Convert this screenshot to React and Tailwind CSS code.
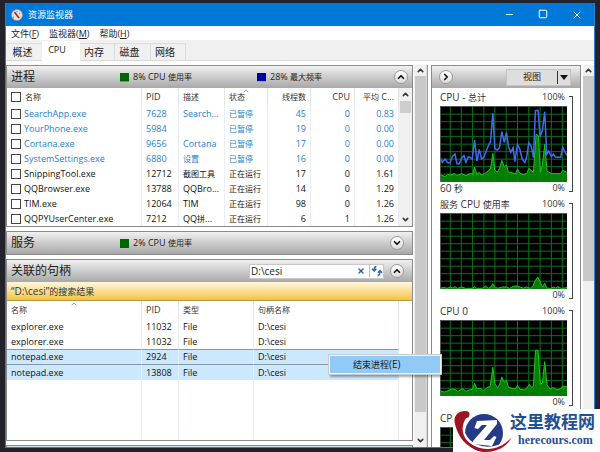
import React from "react";
import { ChevronUp, ChevronDown, ChevronRight, X, Minus, Square } from "lucide-react";

const processes = [
  ["SearchApp.exe", "7628", "Search...", "已暂停", "45", "0", "0.83"],
  ["YourPhone.exe", "5984", "", "已暂停", "19", "0", "0.00"],
  ["Cortana.exe", "9656", "Cortana", "已暂停", "17", "0", "0.00"],
  ["SystemSettings.exe", "6880", "设置", "已暂停", "16", "0", "0.00"],
  ["SnippingTool.exe", "12712", "截图工具", "正在运行", "17", "0", "1.61"],
  ["QQBrowser.exe", "13788", "QQBro...", "正在运行", "14", "0", "1.29"],
  ["TIM.exe", "12064", "TIM", "正在运行", "98", "0", "1.26"],
  ["QQPYUserCenter.exe", "7212", "QQ拼...", "正在运行", "6", "1", "1.26"],
];

const handles = [
  ["explorer.exe", "11032", "File", "D:\\cesi"],
  ["explorer.exe", "11032", "File", "D:\\cesi"],
  ["notepad.exe", "2924", "File", "D:\\cesi"],
  ["notepad.exe", "13808", "File", "D:\\cesi"],
];

const totalBlue =
  "45,218 52,232 60,222 68,233 75,233 82,215 90,207 96,236 103,236 110,218 117,212 123,232 130,215 137,218 142,222 149,165 156,228 163,193 170,222 177,217 183,200 190,183 197,170 204,84 210,190 217,195 224,188 231,140 238,172 245,143 251,185 258,202 265,188 270,230 278,178 285,192 292,222 300,233 306,215 312,173 319,183 326,218 332,77 340,76 346,155 353,135 360,80 366,208 372,198 380,215 386,207 393,217 408,217 414,187 427,212";
const totalGreen =
  "45,268 60,275 68,268 75,270 90,266 96,272 110,266 123,272 137,265 143,268 149,247 156,268 163,262 170,270 180,265 190,258 197,250 204,205 210,255 217,262 224,250 231,226 238,245 245,240 251,262 258,262 272,267 278,252 285,265 295,268 306,266 312,250 319,256 326,262 334,148 341,152 347,262 353,240 360,178 367,258 380,266 395,266 408,266 414,256 427,262";
const serviceGreen =
  "45,294 58,291 66,294 76,290 84,293 90,289 98,294 110,290 122,294 142,294 149,289 156,294 172,294 182,287 190,294 198,290 204,280 211,292 222,293 232,290 246,290 254,294 265,288 276,287 288,291 296,293 306,290 316,294 324,288 332,270 339,260 347,276 353,290 360,279 366,293 378,294 386,290 393,293 400,289 410,294 427,292";
const coreGreen =
  "45,269 58,273 70,269 80,264 90,265 98,272 112,263 124,271 137,265 143,266 149,247 156,263 166,262 176,269 186,260 196,256 204,199 210,248 218,260 224,252 231,228 238,244 245,238 251,259 262,262 272,264 278,253 286,265 300,267 308,258 314,250 320,259 326,256 332,148 340,148 347,250 353,246 360,182 367,252 376,264 386,260 396,266 408,264 414,255 427,257";

const isCjk = (s) => /[\u4e00-\u9fff]/.test(s);

/* Mixed text: Chinese runs are set one size smaller than the Latin ones. */
function Mixed({ text, small = "text-[8px]" }) {
  return text
    .split(/([\u4e00-\u9fff]+)/)
    .filter(Boolean)
    .map((part, i) =>
      isCjk(part) ? (
        <span key={i} className={`${small} leading-none`}>{part}</span>
      ) : (
        <React.Fragment key={i}>{part}</React.Fragment>
      )
    );
}

function RoundButton({ icon: Icon, label }) {
  return (
    <button
      aria-label={label}
      className="flex size-[14px] shrink-0 items-center justify-center rounded-full border border-[#999] bg-gradient-to-b from-white to-[#dcdcdc] text-[#111]"
    >
      <Icon size={10} strokeWidth={4} />
    </button>
  );
}

function Legend({ color, edge, children }) {
  return (
    <span className="flex w-[137px] items-center gap-1 text-[9px] whitespace-nowrap text-[#222]">
      <span className={`size-[9px] border-b ${color} ${edge}`} />
      <span>{children}</span>
    </span>
  );
}

function PanelHeader({ title, children, open }) {
  return (
    <header className="flex h-[22px] items-center bg-gradient-to-b from-[#f1f1f1] to-[#a8a8a8] pr-2 pl-1">
      <h2 className="w-[109px] shrink-0 text-[12px] leading-none text-[#222]">{title}</h2>
      <div className="flex flex-1 items-center">{children}</div>
      <RoundButton icon={open ? ChevronUp : ChevronDown} label={open ? "折叠" : "展开"} />
    </header>
  );
}

function SortMark() {
  return <ChevronUp size={8} strokeWidth={2} className="absolute -top-px left-1/2 -translate-x-1/2 text-[#777]" />;
}

const cell = "h-[15px] border-r border-[#e8eef4] px-1 py-0 leading-[14px] whitespace-nowrap overflow-hidden";
const head = "relative h-[18px] border-r border-[#e3e3e3] px-1 py-0 font-normal leading-[14px] whitespace-nowrap text-[#333]";

function ProcessTable() {
  return (
    <div className="flex">
      <table className="flex-1 table-fixed border-separate border-spacing-0 text-left text-[9px]">
        <colgroup>
          <col />
          <col className="w-[37px]" />
          <col className="w-[46px]" />
          <col className="w-[43px]" />
          <col className="w-[43px]" />
          <col className="w-[44px]" />
          <col className="w-[44px]" />
        </colgroup>
        <thead>
          <tr>
            <th className={head}>
              <label className="flex items-center gap-1">
                <input type="checkbox" className="size-[10px] appearance-none border border-[#444] bg-white" />
                <Mixed text="名称" />
              </label>
            </th>
            <th className={head}>PID</th>
            <th className={head}><Mixed text="描述" /></th>
            <th className={head}><SortMark /><Mixed text="状态" /></th>
            <th className={`${head} text-right`}><Mixed text="线程数" /></th>
            <th className={`${head} text-right`}>CPU</th>
            <th className={`${head} text-right`}><Mixed text="平均 C..." /></th>
          </tr>
        </thead>
        <tbody>
          {processes.map((row) => (
            <tr key={row[1]} className={row[3] === "已暂停" ? "text-[#2580cf]" : "text-[#111]"}>
              <td className={cell}>
                <label className="flex items-center gap-[3px]">
                  <input type="checkbox" className="size-[10px] shrink-0 appearance-none border border-[#444] bg-white" />
                  {row[0]}
                </label>
              </td>
              {row.slice(1).map((value, i) => (
                <td key={i} className={`${cell} ${i > 2 ? "text-right" : ""}`}>
                  <Mixed text={value} />
                </td>
              ))}
            </tr>
          ))}
        </tbody>
      </table>
      <div className="flex w-[13px] flex-col items-center bg-[#f0f0f0] text-[#333]">
        <ChevronUp size={9} strokeWidth={4} className="my-[2px]" />
        <div className="h-3 w-[11px] bg-[#cdcdcd]" />
        <ChevronDown size={9} strokeWidth={4} className="mt-auto mb-[2px]" />
      </div>
    </div>
  );
}

function HandleTable() {
  return (
    <div className="pr-[13px]">
      <table className="w-full table-fixed border-separate border-spacing-0 text-left text-[9px] text-[#111]">
        <colgroup>
          <col />
          <col className="w-[37px]" />
          <col className="w-[75px]" />
          <col className="w-[145px]" />
        </colgroup>
        <thead>
          <tr>
            <th className={head}><SortMark /><Mixed text="名称" /></th>
            <th className={head}>PID</th>
            <th className={head}><Mixed text="类型" /></th>
            <th className={head}><Mixed text="句柄名称" /></th>
          </tr>
        </thead>
        <tbody>
          {handles.map((row, r) => (
            <tr key={r} className={r > 1 ? "bg-[#cce8ff]" : ""}>
              {row.map((value, i) => (
                <td key={i} className={`${cell} ${r === 2 ? "border-y border-y-[#8798a5] leading-[13px]" : ""}`}>
                  {value}
                </td>
              ))}
            </tr>
          ))}
          <tr aria-hidden="true">
            {[0, 1, 2, 3].map((i) => (
              <td key={i} className="h-[60px] border-r border-[#e8eef4] p-0" />
            ))}
          </tr>
        </tbody>
      </table>
    </div>
  );
}

const verticals = [76, 109, 143, 177, 210, 244, 278, 312, 346, 380, 413];

function Graph({ label, top, green, blue, foot, scale = true }) {
  const bottom = top + 228;
  return (
    <section className="mb-[3px] flex gap-[2px]">
      <div className="min-w-0 flex-1">
        <div className="flex h-[14px] justify-between text-[10px] leading-[14px] whitespace-nowrap text-[#333]">
          <span><Mixed text={label} small="text-[9px]" /></span>
          {scale && <span className="pr-[2px] text-[9px]">100%</span>}
        </div>
        <svg viewBox={`45 ${top} 382 228`} preserveAspectRatio="none" className="mt-[2px] block h-[76px] w-full bg-black">
          <g stroke="#07751a" strokeWidth="3">
            {verticals.map((x) => (
              <line key={x} x1={x} x2={x} y1={top} y2={bottom} />
            ))}
            {[1, 2, 3, 4, 5, 6, 7, 8, 9].map((n) => (
              <line key={n} x1="45" x2="427" y1={top + 2 + n * 22.5} y2={top + 2 + n * 22.5} />
            ))}
          </g>
          <polygon points={`45,${bottom} ${green} 427,${bottom}`} fill="#058a05" fillOpacity="0.9" />
          <polyline points={green} fill="none" stroke="#19c819" strokeWidth="3" />
          {blue && <polyline points={blue} fill="none" stroke="#3f6cf0" strokeWidth="4.5" />}
          <path d={`M427 ${top + 1}H46V${bottom}`} fill="none" stroke="#666" strokeWidth="3" />
        </svg>
        {scale && (
          <div className="flex h-3 items-end justify-between text-[10px] leading-3 text-[#333]">
            <span><Mixed text={foot || ""} small="text-[9px]" /></span>
            <span className="pr-[2px] text-[9px]">0%</span>
          </div>
        )}
      </div>
      <div className="mt-[6px] mb-[2px] w-1 border-y border-r border-[#444]" />
    </section>
  );
}

function Logo() {
  return (
    <svg viewBox="0 0 60 43" className="h-[43px] w-[60px] shrink-0">
      <circle cx="31" cy="24" r="19" fill="#263b86" />
      <path d="M10 9C7 20 11 31 23 37C35 42 49 38 58 30" fill="none" stroke="#fff" strokeWidth="3" />
      <path d="M12 2C4 2 0 8 2 15C5 27 12 39 30 42.500C42 44 54 38 58.500 28.500C50 38 39 42 27 39C12 35 5 22 13 9Z" fill="#a01420" />
      <circle cx="13" cy="5.500" r="3.500" fill="#a01420" />
      <path d="M24 12L44 11L44 15L31 31H37L41 27L43.500 28L39 37L20 35V32L34 16H29L25 20L21.500 19Z" fill="#fff" />
    </svg>
  );
}

export default function App() {
  return (
    <div className="relative h-screen overflow-hidden bg-[#23222a] px-[5px] pt-[3px] pb-1 font-['Open_Sans','Noto_Sans_CJK_SC',sans-serif]">
      <div className="flex h-full flex-col overflow-hidden border-x border-b border-[#2c7fc9] bg-white">
        <div className="flex h-[23px] shrink-0 items-center bg-[#0078d7] pl-[5px] text-white">
          <svg viewBox="0 0 12 12" className="mr-[5px] size-3">
            <circle cx="6" cy="6" r="5.5" fill="#e9e4de" stroke="#8b8f96" strokeWidth=".6" />
            <path d="M3.500 3L8 9" stroke="#c0261c" strokeWidth="1.8" />
            <path d="M6 2v1M9 4l-1 .6M3 8l-1 .5" stroke="#555" strokeWidth=".8" />
          </svg>
          <h1 className="flex-1 text-[9px]">资源监视器</h1>
          <div className="flex">
            <button aria-label="最小化" className="flex w-[34px] justify-center"><Minus size={11} strokeWidth={2} /></button>
            <button aria-label="最大化" className="flex w-[34px] justify-center"><Square size={10} strokeWidth={2.4} /></button>
            <button aria-label="关闭" className="flex w-[34px] justify-center"><X size={12} strokeWidth={2} /></button>
          </div>
        </div>
        <nav className="flex h-[14px] shrink-0 items-center gap-[10px] pl-[5px] text-[9px] leading-none text-[#222]">
          <button>文件(<u>F</u>)</button>
          <button>监视器(<u>M</u>)</button>
          <button>帮助(<u>H</u>)</button>
        </nav>
        <div role="tablist" className="flex h-[21px] shrink-0 items-end border-b border-[#d9d9d9] bg-[#f0f0f0] pl-px text-[10px] leading-none text-[#222]">
          <button role="tab" className="h-[17px] w-[35px] border-t border-[#ddd] pr-1">概述</button>
          <button role="tab" aria-selected="true" className="-mb-px h-[20px] w-[38px] bg-white pr-2 pb-1 text-[9px]">CPU</button>
          <button role="tab" className="h-[17px] w-[35px] border-t border-r border-[#ddd] pr-[6px]">内存</button>
          <button role="tab" className="h-[17px] w-[36px] border-t border-r border-[#ddd] pr-[6px]">磁盘</button>
          <button role="tab" className="h-[17px] w-[35px] border-t border-r border-[#ddd] pr-[6px]">网络</button>
        </div>

        <main className="flex min-h-0 flex-1 pt-1">
          <div className="flex min-w-0 flex-1 flex-col gap-1 overflow-hidden">
            <section className="shrink-0 border border-[#8b8b8b]">
              <PanelHeader title="进程" open>
                <Legend color="bg-[#006400]" edge="border-[#35c035]"><Mixed text="8% CPU 使用率" /></Legend>
                <Legend color="bg-[#0000a8]" edge="border-[#6fa8ff]"><Mixed text="28% 最大频率" /></Legend>
              </PanelHeader>
              <ProcessTable />
            </section>
            <section className="shrink-0 border border-[#8b8b8b]">
              <PanelHeader title="服务">
                <Legend color="bg-[#006400]" edge="border-[#006400]"><Mixed text="2% CPU 使用率" /></Legend>
              </PanelHeader>
            </section>
            <section className="shrink-0 border border-[#8b8b8b]">
              <PanelHeader title="关联的句柄" open>
                <div className="mr-[6px] ml-auto flex h-[15px] w-[135px] items-center border border-[#c8c8c8] bg-white text-[#2c66a8]">
                  <input aria-label="搜索句柄" defaultValue="D:\cesi" className="min-w-0 flex-1 px-px text-[10px] leading-none text-[#222] outline-none" />
                  <button aria-label="清除" className="px-1"><X size={8} strokeWidth={4} /></button>
                  <button aria-label="刷新" className="border-l border-[#bbb] pl-px">
                    <svg viewBox="0 0 12 12" className="size-3" fill="none" stroke="#2c66a8" strokeWidth="1.4">
                      <path d="M5.500 1.500C3.500 1.500 3.200 3 3.200 5M1 3.800L3.200 6L5.400 3.800M6.500 10.500C8.500 10.500 9 9 9 6.500M6.800 7.800L9 5.600L11.200 7.800" />
                    </svg>
                  </button>
                </div>
              </PanelHeader>
              <p className="h-[19px] border-b border-[#b59a4a] bg-gradient-to-b from-[#fff7dc] to-[#f4c332] px-1 text-[10px] leading-[18px] text-[#333]">
                <Mixed text={"\u201cD:\\cesi\u201d的搜索结果"} small="text-[9px]" />
              </p>
              <HandleTable />
            </section>
            <section className="h-6 shrink-0 border border-[#8b8b8b] bg-[#cfe3ee]" />
          </div>
          <div className="ml-px flex w-3 shrink-0 flex-col items-center bg-[#f0f0f0] text-[#333]">
            <ChevronUp size={9} strokeWidth={4} className="my-[1px] shrink-0" />
            <div className="h-[336px] w-[11px] bg-[#c9c9c9]" />
            <ChevronDown size={9} strokeWidth={4} className="mt-auto mb-[2px] shrink-0" />
          </div>
          <div className="mr-[3px] w-[2px] shrink-0 border-r border-[#999] bg-[#ddd]" />

          <aside className="w-[150px] shrink-0 overflow-hidden border border-b-0 border-[#8b8b8b]">
            <header className="flex h-[22px] items-center justify-between bg-gradient-to-b from-[#f1f1f1] to-[#a8a8a8] pr-[9px] pl-[7px]">
              <RoundButton icon={ChevronRight} label="折叠图表" />
              <button className="flex h-[17px] w-[65px] items-center border border-[#c4c4c4] bg-[#dedede] text-[9px] text-[#222]">
                <span className="flex-1">视图</span>
                <span className="flex h-[13px] items-center border-l border-[#333] px-[2px]">
                  <svg viewBox="0 0 8 5" className="h-[5px] w-2"><path d="M0 0H8L4 5Z" fill="#111" /></svg>
                </span>
              </button>
            </header>
            <div className="pt-[2px] pr-[7px] pl-2">
              <Graph label="CPU - 总计" top={63} green={totalGreen} blue={totalBlue} foot="60 秒" />
              <Graph label="服务 CPU 使用率" top={68} green={serviceGreen} />
              <Graph label="CPU 0" top={57} green={coreGreen} />
              <Graph label="CPU" top={57} green={coreGreen} scale={false} />
            </div>
          </aside>
          <div className="ml-[2px] flex w-[11px] shrink-0 flex-col items-center bg-[#f0f0f0] text-[#333]">
            <ChevronUp size={9} strokeWidth={4} className="my-[1px] shrink-0" />
            <div className="h-[205px] w-full bg-[#c9c9c9]" />
          </div>
        </main>
      </div>

      <div role="menu" className="absolute top-[354px] left-[328px] w-[114px] border border-[#ccc] bg-[#f2f2f2] p-px shadow-[2px_2px_2px_rgba(0,0,0,0.35)]">
        <button role="menuitem" className="block h-[17px] w-full bg-[#91c9f7] pl-[23px] text-left text-[10px] leading-[17px] text-[#222]">
          <Mixed text="结束进程(E)" small="text-[9px]" />
        </button>
      </div>

      <div className="absolute right-0 bottom-0 flex h-[43px] w-[147px] bg-white">
        <Logo />
        <div className="-ml-[3px] pt-[2px] font-bold whitespace-nowrap text-[#1f4f95]">
          <div className="text-[17px] leading-[22px]">这里教程网</div>
          <div className="pl-2 font-['Liberation_Serif',serif] text-[12px] leading-[14px]">herecours.com</div>
        </div>
      </div>
    </div>
  );
}
